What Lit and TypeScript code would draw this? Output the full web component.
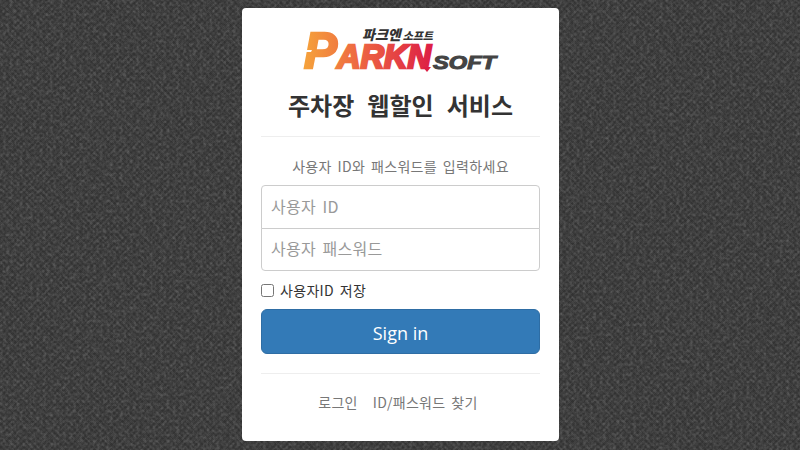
import { LitElement, html, css } from "lit";
import { customElement } from "lit/decorators.js";

@customElement("app-root")
export class AppRoot extends LitElement {
  static styles = css`
    :host {
      display: block;
      width: 800px;
      height: 450px;
      overflow: hidden;
      font-family: "Noto Sans CJK KR", "Noto Sans", sans-serif;
      word-spacing: 0.15em;
      letter-spacing: 0.02em;
      background-color: #363636;
      background-image:
        url("data:image/svg+xml,%3Csvg xmlns='http://www.w3.org/2000/svg' width='800' height='450'%3E%3Cfilter id='n' x='0' y='0' width='100%25' height='100%25'%3E%3CfeTurbulence type='fractalNoise' baseFrequency='.3' numOctaves='2' seed='4'/%3E%3CfeColorMatrix values='0 0 0 0 1 0 0 0 0 1 0 0 0 0 1 .32 0 0 0 -.13'/%3E%3C/filter%3E%3Crect width='800' height='450' filter='url(%23n)'/%3E%3C/svg%3E"),
        repeating-linear-gradient(45deg, rgba(255,255,255,0.025) 0 2px, rgba(0,0,0,0.03) 2px 4px),
        repeating-linear-gradient(-45deg, rgba(255,255,255,0.025) 0 2px, rgba(0,0,0,0.03) 2px 4px);
    }
    .wrap { display: flex; justify-content: center; padding-top: 8px; }
    .card {
      box-sizing: border-box;
      width: 317px;
      height: 433px;
      margin-left: 1px;
      padding: 0 19px;
      background: #fff;
      border-radius: 4px;
      display: flex;
      flex-direction: column;
    }
    .logo { display: block; width: 200px; height: 52px; margin: 18px 0 0 40px; letter-spacing: 0; }
    h1 {
      margin: 7px 0 0;
      height: 40px;
      font-size: 24px;
      line-height: 39px;
      font-weight: 700;
      color: #333;
      text-align: center;
      white-space: nowrap;
      letter-spacing: 0;
      word-spacing: 0.32em;
    }
    hr { width: 100%; margin: 0; border: 0; border-top: 1px solid #eee; }
    .h1 { margin-top: 11px; }
    .sub {
      margin: 19px 0 0;
      font-size: 14px;
      line-height: 20px;
      color: #777;
      text-align: center;
    }
    .inputs { margin-top: 9px; display: flex; flex-direction: column; }
    input[type="text"] {
      box-sizing: border-box;
      width: 100%;
      padding: 0 9px 3px;
      border: 1px solid #ccc;
      font: inherit;
      font-size: 16px;
      word-spacing: 0.15em;
      letter-spacing: 0.02em;
      color: #555;
      outline: none;
      background: #fff;
    }
    input::placeholder { color: #999; opacity: 1; }
    .a { height: 44px; border-radius: 4px 4px 0 0; }
    .b { height: 43px; border-radius: 0 0 4px 4px; margin-top: -1px; }
    .check {
      margin-top: 9px;
      height: 20px;
      display: flex;
      align-items: center;
      gap: 6px;
      font-size: 14px;
      color: #333;
    }
    .check input { width: 13px; height: 13px; margin: 0; }
    button {
      margin-top: 9px;
      height: 45px;
      flex: none;
      width: 100%;
      padding: 2px 0 0;
      border: 1px solid #2e6da4;
      border-radius: 6px;
      background: #337ab7;
      color: #fff;
      font: inherit;
      font-family: "Open Sans", sans-serif;
      font-size: 18px;
      letter-spacing: 0;
      word-spacing: normal;
    }
    .h2 { margin-top: 19px; }
    .links {
      margin-top: 18px;
      padding-right: 5px;
      display: flex;
      justify-content: center;
      gap: 15px;
      font-size: 14px;
      line-height: 20px;
      color: #777;
    }
  `;

  render() {
    return html`
      <div class="wrap">
        <div class="card">
          <svg class="logo" viewBox="0 0 200 52" aria-label="ParkN Soft">
            <defs>
              <linearGradient id="g" gradientUnits="userSpaceOnUse" x1="4" x2="131" y1="0" y2="0">
                <stop offset="0" stop-color="#f5a13b"></stop>
                <stop offset="0.4" stop-color="#ee6a42"></stop>
                <stop offset="1" stop-color="#dd1f45"></stop>
              </linearGradient>
            </defs>
            <g font-family="'Liberation Sans', sans-serif" font-weight="700" font-style="italic" word-spacing="0">
              <text x="3" y="42" fill="url(#g)" stroke="url(#g)" stroke-width="2.4"
                textLength="127" lengthAdjust="spacingAndGlyphs"><tspan font-size="50">P</tspan><tspan font-size="33">ARKN</tspan></text>
              <polygon points="2,24 11,24 10,26 1,26" fill="#fff"></polygon>
              <polygon points="122,41 130,41 126,46" fill="#dd1f45"></polygon>
              <text x="132" y="43" font-size="18" fill="#444" stroke="#444" stroke-width="1"
                textLength="63" lengthAdjust="spacingAndGlyphs">SOFT</text>
              <text x="61" y="14" font-family="'Noto Sans CJK KR', sans-serif" font-weight="900" fill="#333"
                textLength="71" lengthAdjust="spacingAndGlyphs"><tspan font-size="14">파크엔</tspan><tspan font-size="11" dx="2">소프트</tspan></text>
            </g>
          </svg>
          <h1>주차장 웹할인 서비스</h1>
          <hr class="h1" />
          <p class="sub">사용자 ID와 패스워드를 입력하세요</p>
          <div class="inputs">
            <input class="a" type="text" placeholder="사용자 ID" />
            <input class="b" type="text" placeholder="사용자 패스워드" />
          </div>
          <label class="check"><input type="checkbox" />사용자ID 저장</label>
          <button>Sign in</button>
          <hr class="h2" />
          <div class="links"><span>로그인</span><span>ID/패스워드 찾기</span></div>
        </div>
      </div>
    `;
  }
}
